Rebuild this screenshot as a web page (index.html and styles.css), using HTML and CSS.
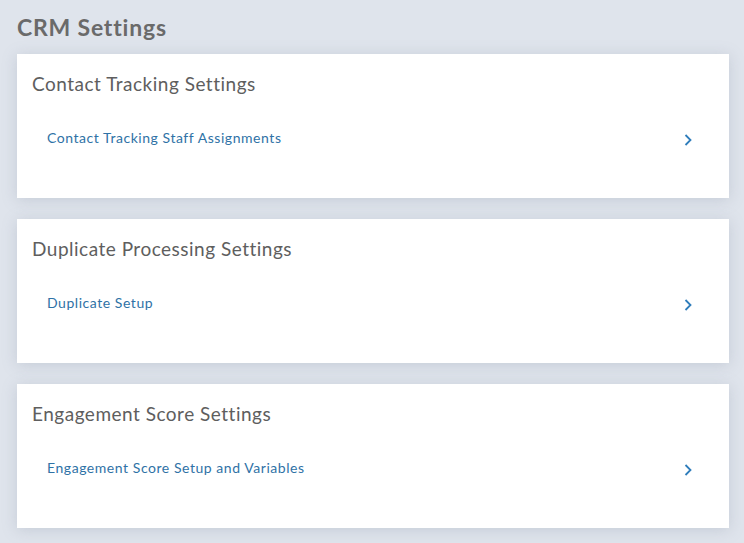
FILE: index.html
```html
<!DOCTYPE html>
<html lang="en">
<head>
  <meta charset="UTF-8" />
  <meta name="viewport" content="width=device-width, initial-scale=1.0" />
  <title>CRM Settings</title>
  <link rel="stylesheet" href="styles.css">
</head>
<body>
  <main class="page">
    <h1 class="page-title">CRM Settings</h1>

    <section class="settings-card">
      <h2>Contact Tracking Settings</h2>
      <a class="settings-link" href="#">
        <span>Contact Tracking Staff Assignments</span>
        <svg class="chevron" viewBox="0 0 8 12" width="8" height="12"><path d="M1.5 1 L6.5 6 L1.5 11" /></svg>
      </a>
    </section>

    <section class="settings-card">
      <h2>Duplicate Processing Settings</h2>
      <a class="settings-link" href="#">
        <span>Duplicate Setup</span>
        <svg class="chevron" viewBox="0 0 8 12" width="8" height="12"><path d="M1.5 1 L6.5 6 L1.5 11" /></svg>
      </a>
    </section>

    <section class="settings-card">
      <h2>Engagement Score Settings</h2>
      <a class="settings-link" href="#">
        <span>Engagement Score Setup and Variables</span>
        <svg class="chevron" viewBox="0 0 8 12" width="8" height="12"><path d="M1.5 1 L6.5 6 L1.5 11" /></svg>
      </a>
    </section>
  </main>
</body>
</html>
```

FILE: styles.css
```css
* { box-sizing: border-box; }

body {
  margin: 0;
  font-family: Lato, "Noto Sans", sans-serif;
  background: #dfe4ec;
  color: #666;
}

.page {
  padding: 12px 15px 16px 17px;
  display: flex;
  flex-direction: column;
  gap: 21px;
}

.page-title {
  margin: 0 0 -9px;
  font-size: 23px;
  font-weight: 700;
  letter-spacing: 0.8px;
  color: #6a6a6a;
  line-height: 30px;
}

.settings-card {
  background: #fff;
  height: 144px;
  padding: 18px 15px 0;
  box-shadow: 0 2px 14px rgba(120, 130, 150, 0.25);
}

.settings-card h2 {
  margin: 0;
  font-size: 19px;
  font-weight: 400;
  letter-spacing: 0.5px;
  line-height: 24px;
  color: #5e5e5e;
}

.settings-link {
  display: flex;
  justify-content: space-between;
  align-items: center;
  margin-top: 32px;
  padding: 0 22px 0 15px;
  font-size: 14px;
  letter-spacing: 0.55px;
  line-height: 20px;
  color: #2f72a6;
  text-decoration: none;
}

.chevron {
  margin-top: 4px;
}

.chevron path {
  fill: none;
  stroke: #2f7dbb;
  stroke-width: 1.8;
}
```
